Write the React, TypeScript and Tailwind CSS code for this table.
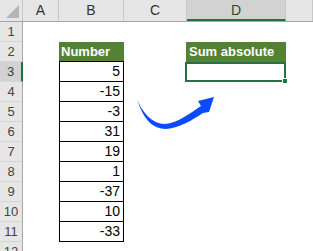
import React from 'react';

const cols = [
  { key: 'A', w: 'w-[36px]' },
  { key: 'B', w: 'w-[65px]' },
  { key: 'C', w: 'w-[63px]' },
  { key: 'D', w: 'w-[99px]' },
  { key: 'E', w: 'w-[27px]' }
];

const numbers: Record<number, string> = {
  3: '5',
  4: '-15',
  5: '-3',
  6: '31',
  7: '19',
  8: '1',
  9: '-37',
  10: '10',
  11: '-33'
};

const rows = [1, 2, 3, 4, 5, 6, 7, 8, 9, 10, 11, 12];

const Arrow = () => (
  <svg className="pointer-events-none absolute left-0 top-0" width="313" height="251" viewBox="0 0 313 251">
    <path
      d="M137,99 C142,115 150,129 166,129 C180,128 192,120 203,113 L209,112 L214,97 L198,101 L201,106 C190,113 178,123 165,124 C152,124 142,112 137,99 Z"
      fill="#0a4bff"
    />
  </svg>
);

export default function App() {
  return (
    <div className="relative h-[251px] w-[313px] overflow-hidden bg-white font-['Liberation_Sans',Arial,sans-serif] text-[14px] text-black">
      {/* column headers */}
      <div className="flex h-[22px] border-b border-[#a6a6a6] bg-[#e6e6e6]">
        <div className="relative w-[23px] shrink-0 border-r border-[#c8c8c8]">
          <div className="absolute bottom-[3px] right-[3px] h-0 w-0 border-b-[13px] border-l-[13px] border-b-[#b4b4b4] border-l-transparent" />
        </div>
        {cols.map((c) => (
          <div
            key={c.key}
            className={`${c.w} flex shrink-0 items-center justify-center border-r border-[#c8c8c8] text-[14px] ${
              c.key === 'D' ? 'border-b-2 border-b-[#217346] bg-[#d2d2d2] pt-[2px] text-[#1e4e32]' : 'text-[#333]'
            }`}
          >
            {c.key === 'E' ? '' : c.key}
          </div>
        ))}
      </div>

      {rows.map((r) => (
        <div key={r} className="flex h-[20px]">
          <div
            className={`flex w-[23px] shrink-0 items-center justify-center border-b border-[#d4d4d4] text-[13px] ${
              r === 3 ? 'border-r-2 border-r-[#217346] bg-[#d2d2d2] text-[#1e4e32]' : 'border-r border-r-[#a6a6a6] bg-[#e6e6e6] text-[#444]'
            }`}
          >
            {r}
          </div>
          <div className="w-[36px] shrink-0" />
          {r === 2 ? (
            <div className="flex w-[65px] shrink-0 items-center border-b border-black bg-[#548235] pl-[2px] text-[13px] font-bold text-white">
              Number
            </div>
          ) : numbers[r] ? (
            <div className="flex w-[65px] shrink-0 items-center justify-end border-x border-b border-black pr-[3px] text-[14px]">
              {numbers[r]}
            </div>
          ) : (
            <div className="w-[65px] shrink-0" />
          )}
          <div className="w-[62px] shrink-0" />
          {r === 2 ? (
            <div className="flex w-[100px] shrink-0 items-center bg-[#548235] pl-[3px] text-[13px] font-bold text-white">
              Sum absolute
            </div>
          ) : r === 3 ? (
            <div className="relative w-[101px] shrink-0 -translate-x-[1px] border-2 border-[#217346]">
              <div className="absolute -bottom-[4px] -right-[4px] h-[6px] w-[6px] border border-white bg-[#217346]" />
            </div>
          ) : (
            <div className="w-[100px] shrink-0" />
          )}
        </div>
      ))}

      <Arrow />
    </div>
  );
}
